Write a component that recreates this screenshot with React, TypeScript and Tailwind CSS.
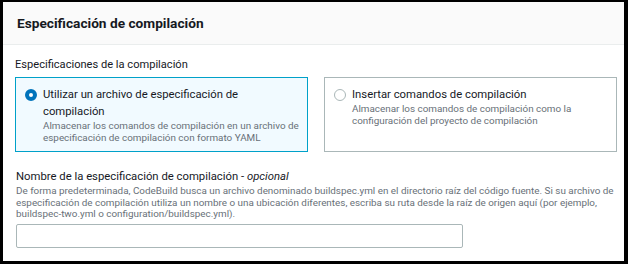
import { useState } from "react";

const options = [
  {
    id: "file",
    title: ["Utilizar un archivo de especificación de", "compilación"],
    desc: ["Almacenar los comandos de compilación en un archivo de", "especificación de compilación con formato YAML"],
  },
  {
    id: "inline",
    title: ["Insertar comandos de compilación"],
    desc: ["Almacenar los comandos de compilación como la", "configuración del proyecto de compilación"],
  },
];

function Radio({ checked }: { checked: boolean }) {
  return checked ? (
    <span className="mt-[2.5px] block h-[12px] w-[12px] shrink-0 rounded-full border-4 border-[#0073bb] bg-white" />
  ) : (
    <span className="mt-[2.5px] block h-[12px] w-[12px] shrink-0 rounded-full border-[1.5px] border-[#aab7b8] bg-white" />
  );
}

export default function App() {
  const [selected, setSelected] = useState("file");

  return (
    <div className="h-[264px] w-[628px] border-t-2 border-l-[3px] border-r-[4px] border-b-[3px] border-black bg-white font-['Roboto',sans-serif] text-[#16191f]">
      <div className="flex h-[43px] items-center border-b border-[#eaeded] bg-[#fafafa] px-[14px]">
        <h2 className="text-[13.7px] font-bold">Especificación de compilación</h2>
      </div>

      <div className="pl-[12px] pr-[7px]">
        <div className="mt-[11px] text-[11.1px] leading-[18px]">Especificaciones de la compilación</div>

        <div className="mt-[3px] grid grid-cols-2 gap-[16px]">
          {options.map((opt) => {
            const on = selected === opt.id;
            return (
              <button
                key={opt.id}
                onClick={() => setSelected(opt.id)}
                className={
                  on
                    ? "flex h-[75px] gap-[6px] border border-[#00a1c9] bg-[#f1faff] pl-[9px] pt-[8px] text-left"
                    : "flex h-[75px] gap-[6px] border border-[#aab7b8] bg-white pl-[9px] pt-[8px] text-left"
                }
              >
                <Radio checked={on} />
                <div>
                  <div className="text-[11.3px] leading-[17px]">
                    {opt.title.map((t, i) => (
                      <div key={i}>{t}</div>
                    ))}
                  </div>
                  <div className="text-[9.9px] leading-[12px] text-[#687078]">
                    {opt.desc.map((t, i) => (
                      <div key={i}>{t}</div>
                    ))}
                  </div>
                </div>
              </button>
            );
          })}
        </div>

        <div className="mt-[16px] pl-[1px]">
          <div className="text-[11.3px] leading-[17px]">
            Nombre de la especificación de compilación - <i>opcional</i>
          </div>
          <p className="text-[9.9px] leading-[11.5px] text-[#687078]">
            De forma predeterminada, CodeBuild busca un archivo denominado buildspec.yml en el directorio raíz del código fuente. Si su archivo de
            <br />
            especificación de compilación utiliza un nombre o una ubicación diferentes, escriba su ruta desde la raíz de origen aquí (por ejemplo,
            <br />
            buildspec-two.yml o configuration/buildspec.yml).
          </p>
          <input
            type="text"
            className="mt-[4px] block h-[24px] w-[447px] rounded-[2px] border border-[#aab7b8] bg-white px-2 text-[11.3px] outline-none"
          />
        </div>
      </div>
    </div>
  );
}
